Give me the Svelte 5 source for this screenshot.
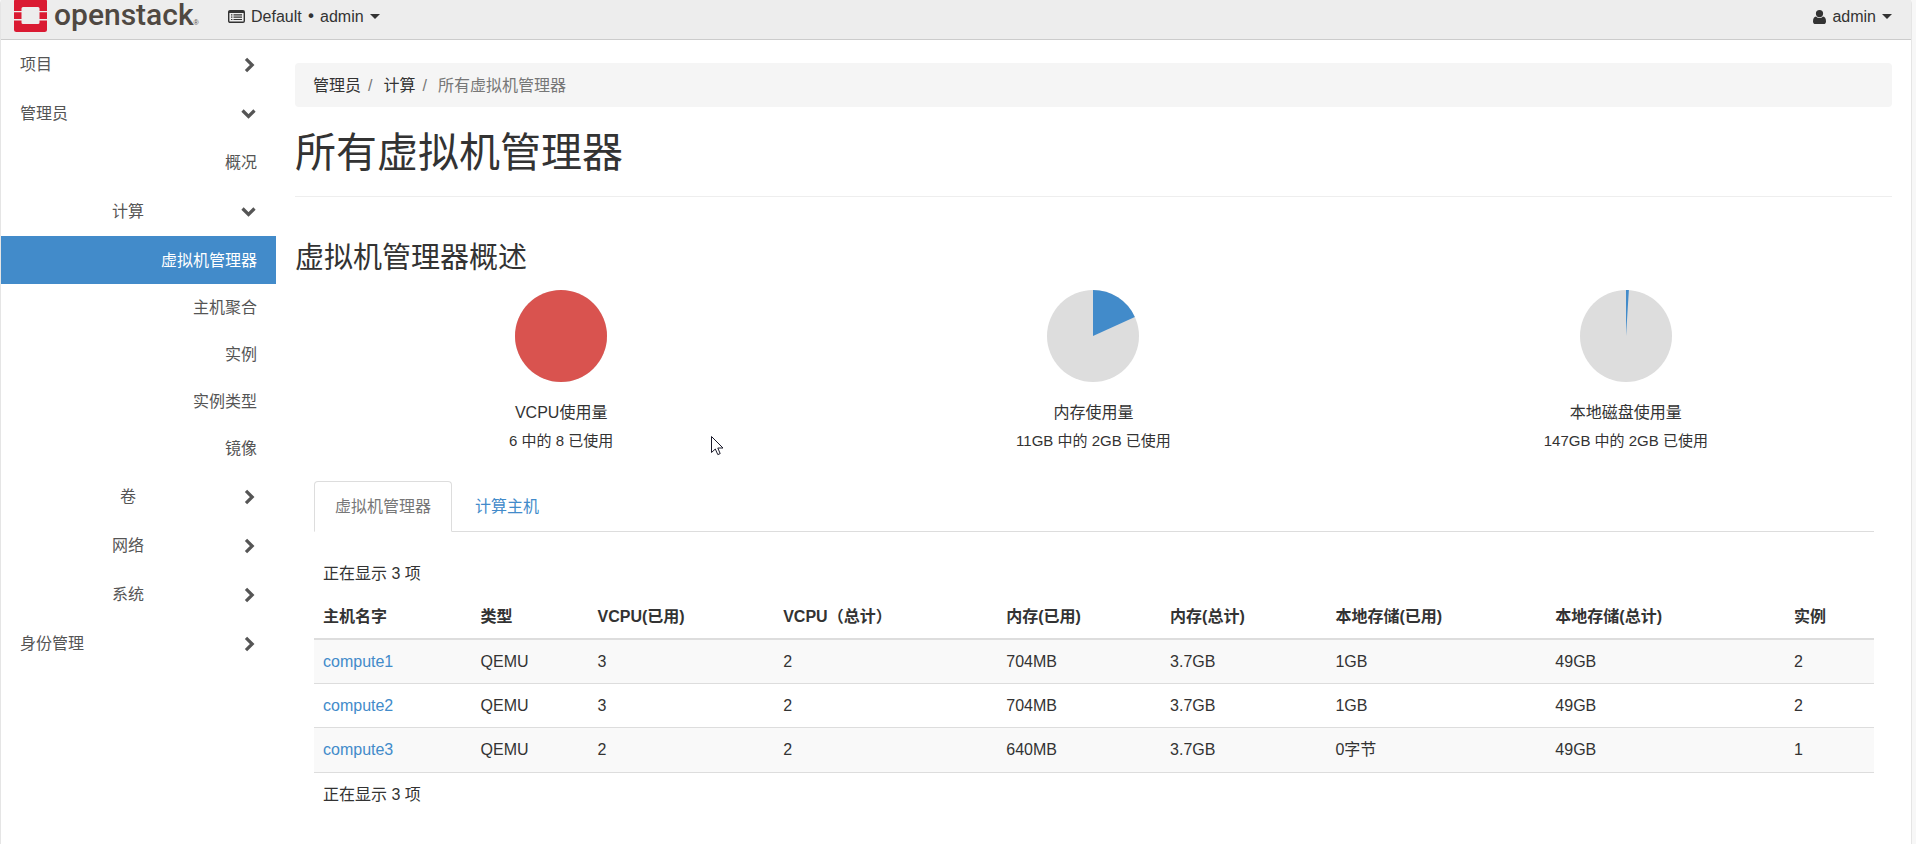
<script lang="ts">
  type NavItem = { label: string; kind: 'root' | 'group' | 'leaf' | 'top-leaf'; open?: boolean; active?: boolean };

  const nav: NavItem[] = [
    { label: '项目', kind: 'root' },
    { label: '管理员', kind: 'root', open: true },
    { label: '概况', kind: 'top-leaf' },
    { label: '计算', kind: 'group', open: true },
    { label: '虚拟机管理器', kind: 'leaf', active: true },
    { label: '主机聚合', kind: 'leaf' },
    { label: '实例', kind: 'leaf' },
    { label: '实例类型', kind: 'leaf' },
    { label: '镜像', kind: 'leaf' },
    { label: '卷', kind: 'group' },
    { label: '网络', kind: 'group' },
    { label: '系统', kind: 'group' },
    { label: '身份管理', kind: 'root' },
  ];

  const usage = [
    { title: 'VCPU使用量', text: '6 中的 8 已使用', share: 1 },
    { title: '内存使用量', text: '11GB 中的 2GB 已使用', share: 2 / 11 },
    { title: '本地磁盘使用量', text: '147GB 中的 2GB 已使用', share: 1 / 100 },
  ];

  const columns = [
    { label: '主机名字', width: 10.1 },
    { label: '类型', width: 7.5 },
    { label: 'VCPU(已用)', width: 11.9 },
    { label: 'VCPU（总计）', width: 14.3 },
    { label: '内存(已用)', width: 10.5 },
    { label: '内存(总计)', width: 10.6 },
    { label: '本地存储(已用)', width: 14.1 },
    { label: '本地存储(总计)', width: 15.3 },
    { label: '实例', width: 5.7 },
  ];

  const hosts = [
    ['compute1', 'QEMU', '3', '2', '704MB', '3.7GB', '1GB', '49GB', '2'],
    ['compute2', 'QEMU', '3', '2', '704MB', '3.7GB', '1GB', '49GB', '2'],
    ['compute3', 'QEMU', '2', '2', '640MB', '3.7GB', '0字节', '49GB', '1'],
  ];

  let tab = $state('hypervisors');

  // wedge from twelve o'clock, clockwise
  function wedge(share: number) {
    const a = share * 2 * Math.PI;
    const x = 46 + 46 * Math.sin(a);
    const y = 46 - 46 * Math.cos(a);
    return `M46 46V0A46 46 0 ${share > 0.5 ? 1 : 0} 1 ${x} ${y}Z`;
  }
</script>

<div class="page">
  <header>
    <a class="brand" href="#home" aria-label="openstack">
      <svg class="mark" width="33" height="33" viewBox="0 0 33 33">
        <path fill="#da1a32" d="M2.500 0h28A2.500 2.500 0 0 1 33 2.500V12h-7.500V9.500a1.500 1.500 0 0 0-1.500-1.500H9a1.500 1.500 0 0 0-1.500 1.500V12H0V2.500A2.500 2.500 0 0 1 2.500 0zM0 13.200h7.500v6.800H0zM25.500 13.200H33v6.800h-7.500zM0 21.400h7.500v2.100A1.500 1.500 0 0 0 9 25h15a1.500 1.500 0 0 0 1.500-1.500v-2.100H33v9.100a2.500 2.500 0 0 1-2.500 2.500h-28A2.500 2.500 0 0 1 0 30.500z" />
      </svg>
      <span class="word">openstack</span><span class="reg">®</span>
    </a>
    <button class="menu">
      <svg width="17" height="13" viewBox="0 0 17 13">
        <rect x="0.7" y="0.7" width="15.6" height="11.6" rx="1.3" fill="none" stroke="#333" stroke-width="1.4" />
        <path fill="#333" d="M1 1h15v2H1zM3 4.3h1.4v1.2H3zM5.5 4.3H14v1.2H5.5zM3 6.6h1.4v1.2H3zM5.5 6.6H14v1.2H5.5zM3 8.9h1.4v1.2H3zM5.5 8.9H14v1.2H5.5z" />
      </svg>
      <span>Default <span class="dot">•</span> admin</span>
      <i class="caret"></i>
    </button>
    <button class="menu user">
      <svg width="13" height="14" viewBox="0 0 13 14">
        <path fill="#333" d="M6.5 0a3.6 3.6 0 0 1 0 7.2a3.6 3.6 0 0 1 0-7.2zM3 6.4a4.6 4.6 0 0 0 7 0c2 .2 3 2.2 3 5 0 1.600-1 2.600-2.400 2.600H2.400C1 14 0 13 0 11.400c0-2.800 1-4.800 3-5z" />
      </svg>
      <span>admin</span>
      <i class="caret"></i>
    </button>
  </header>

  <div class="body">
    <nav>
      {#each nav as item}
        <a href="#nav" class={item.kind} class:active={item.active}>
          <span>{item.label}</span>
          {#if item.kind === 'root' || item.kind === 'group'}
            <svg width="16" height="16" viewBox="0 0 16 16">
              <path fill="none" stroke="#555" stroke-width="3.200" d={item.open ? 'M1.500 4.500L7.500 10.500L13.500 4.500' : 'M5 1.800L11.200 8L5 14.200'} />
            </svg>
          {/if}
        </a>
      {/each}
    </nav>

    <main>
      <ol class="crumbs">
        <li><a href="#admin">管理员</a></li>
        <li><a href="#compute">计算</a></li>
        <li>所有虚拟机管理器</li>
      </ol>

      <h1>所有虚拟机管理器</h1>
      <h3>虚拟机管理器概述</h3>

      <div class="charts">
        {#each usage as u}
          <div class="chart">
            <svg width="92" height="92" viewBox="0 0 92 92">
              <circle cx="46" cy="46" r="46" fill="#ddd" />
              {#if u.share === 1}
                <circle cx="46" cy="46" r="46" fill="#d9534f" />
              {:else}
                <path d={wedge(u.share)} fill="#428bca" />
              {/if}
            </svg>
            <div class="c-title">{u.title}</div>
            <div class="c-text">{u.text}</div>
          </div>
        {/each}
      </div>

      <div class="panel">
        <div class="tabs">
          <button class:on={tab === 'hypervisors'} onclick={() => (tab = 'hypervisors')}>虚拟机管理器</button>
          <button class:on={tab === 'hosts'} onclick={() => (tab = 'hosts')}>计算主机</button>
        </div>

        <table>
          <colgroup>
            {#each columns as c}
              <col style="width:{c.width}%" />
            {/each}
          </colgroup>
          <thead>
            <tr><td colspan="9">正在显示 3 项</td></tr>
            <tr class="heads">
              {#each columns as c}
                <th scope="col">{c.label}</th>
              {/each}
            </tr>
          </thead>
          <tbody>
            {#each hosts as row}
              <tr>
                {#each row as cell, i}
                  <td>{#if i === 0}<a href="#{cell}">{cell}</a>{:else}{cell}{/if}</td>
                {/each}
              </tr>
            {/each}
          </tbody>
          <tfoot>
            <tr><td colspan="9">正在显示 3 项</td></tr>
          </tfoot>
        </table>
      </div>
    </main>
  </div>

  <svg class="pointer" width="13" height="20" viewBox="0 0 13 20">
    <path fill="#fff" stroke="#1a1a2a" d="M.5 .5V16.500L4.300 13L6.800 18.600L9.200 17.600L6.800 12H12z" />
  </svg>
</div>

<style>
  :global(body) {
    margin: 0;
    background: #f7f7f7;
  }

  .page {
    position: relative;
    box-sizing: border-box;
    min-height: 100vh;
    margin-right: 4px;
    border: solid #e5e5e5;
    border-width: 0 1px;
    border-radius: 4px 4px 0 0;
    background: #fff;
    color: #333;
    font: 16px/23px "Liberation Sans", "Noto Sans CJK SC", sans-serif;
  }

  a { color: #428bca; text-decoration: none; }

  button {
    border: 0;
    background: none;
    color: inherit;
    font: inherit;
    cursor: pointer;
  }

  header {
    display: flex;
    align-items: center;
    height: 39px;
    padding: 0 19px 0 13px;
    border-bottom: 1px solid #ccc;
    background: #ededed;
  }

  .brand {
    display: flex;
    align-items: flex-end;
    width: 196px;
    height: 32px;
    margin-bottom: 7px;
    color: #4f4842;
  }
  .mark { flex-shrink: 0; }
  .word {
    margin-left: 7px;
    font: 500 30px/35px Roboto, sans-serif;
  }
  .reg { font-size: 7px; line-height: 18px; }

  .menu {
    display: flex;
    align-items: center;
    gap: 6px;
    margin: 0 0 6px 18px;
    padding: 0;
  }
  .menu.user { margin-left: auto; }
  .dot {
    font-family: "DejaVu Sans", sans-serif;
    line-height: 16px;
  }

  .caret {
    border: 5px solid transparent;
    border-top-color: #333;
    border-bottom: 0;
  }

  .body { display: flex; }

  nav {
    flex: 0 0 275px;
    display: flex;
    flex-direction: column;
  }
  nav a {
    display: flex;
    align-items: center;
    justify-content: space-between;
    height: 49px;
    padding: 0 19px;
    color: #555;
  }
  nav .group { padding-left: 14px; }
  nav .group span { flex: 1; text-align: center; }
  nav .leaf, nav .top-leaf { justify-content: flex-end; }
  nav .leaf { height: 47px; }
  nav .active {
    height: 48px;
    background: #428bca;
    color: #fff;
  }

  main {
    flex: 1;
    min-width: 0;
    padding: 23px 19px;
  }

  .crumbs {
    display: flex;
    margin: 0 0 24px;
    padding: 11px 18px 10px;
    border-radius: 4px;
    background: #f5f5f5;
    color: #777;
    list-style: none;
  }
  .crumbs a { color: #333; }
  .crumbs li + li::before {
    content: "/";
    margin: 0 11px 0 7px;
  }

  h1 {
    margin: 0 0 45px;
    padding-bottom: 20px;
    border-bottom: 1px solid #eee;
    font-size: 41px;
    line-height: 45px;
    font-weight: 400;
  }
  h3 {
    margin: 0 0 16px;
    font-size: 29px;
    line-height: 32px;
    font-weight: 400;
  }

  .charts { display: flex; }
  .chart {
    flex: 1;
    display: flex;
    flex-direction: column;
    align-items: center;
  }
  .c-title { margin: 19px 0 5px; }
  .c-text { font-size: 15px; }

  .panel { margin: 29px 18px 0 19px; }

  .tabs {
    display: flex;
    gap: 2px;
    margin-bottom: 20px;
    border-bottom: 1px solid #ddd;
  }
  .tabs button {
    margin-bottom: -1px;
    padding: 13px 20px;
    border: 1px solid transparent;
    border-radius: 4px 4px 0 0;
    color: #428bca;
  }
  .tabs .on {
    border-color: #ddd;
    border-bottom-color: #fff;
    background: #fff;
    color: #777;
  }

  table {
    width: 100%;
    table-layout: fixed;
    border-collapse: separate;
    border-spacing: 0;
  }
  th, td {
    padding: 10px 9px;
    text-align: left;
  }
  .heads th { border-bottom: 2px solid #ddd; }
  tbody td { border-bottom: 1px solid #ddd; }
  tbody tr:last-child td { padding-bottom: 11px; }
  tbody tr:nth-child(odd) { background: #f9f9f9; }

  .pointer {
    position: absolute;
    top: 436px;
    left: 710px;
    pointer-events: none;
  }
</style>
